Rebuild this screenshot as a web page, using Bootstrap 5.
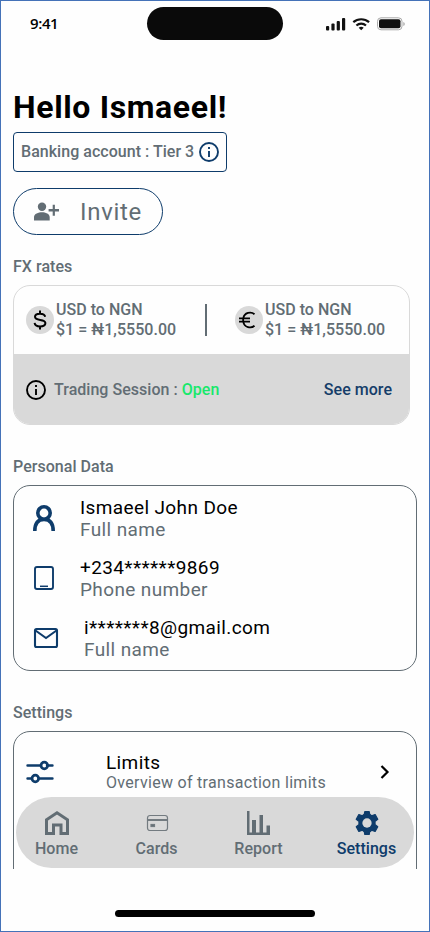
<!DOCTYPE html>
<html lang="en">
<head>
<meta charset="utf-8">
<meta name="viewport" content="width=device-width, initial-scale=1">
<title>Settings</title>
<link href="https://cdn.jsdelivr.net/npm/bootstrap@5.3.0/dist/css/bootstrap.min.css" rel="stylesheet">
<style>
:root{--slate:#626d74;--navy:#0e3c6b;--ash:#d9d9d9}
body{font-family:Roboto,"Liberation Sans",sans-serif;color:#000;background:#fefefe}
svg{display:block;flex:none}
.screen{width:430px;height:932px;border:1px solid #4472b8;background:#fefefe}
.status{height:53px;padding:6px 25px 0 29px}
.clock{font:600 15px/32px "Open Sans",sans-serif;letter-spacing:-.4px;width:117px}
.island{flex:none;width:136px;height:33px;border-radius:17px;background:#0a0a0a;margin-right:42px}
.content{height:815px;padding:0 12px}
.hello{font-size:32px;font-weight:700;line-height:38px;letter-spacing:.64px;margin:34px 0 0}
.lbl{font-size:16px;font-weight:500;line-height:20px;letter-spacing:.03px;color:var(--slate)}
.tier{width:214px;height:40px;border:1px solid var(--navy);border-radius:4px;margin-top:6px;padding-left:7px;gap:5px}
.invite{width:150px;height:47px;border:1px solid var(--navy);border-radius:24px;margin-top:16px;padding:0 0 0 20px;gap:20px;color:var(--slate);font-size:24px;letter-spacing:.7px;line-height:1}
.head-fx{margin-top:22px}
.head-panel{margin-top:32px}
.fx{width:397px;height:140px;border:1px solid var(--ash);border-radius:17px;margin-top:8px}
.rates{height:68px;padding-left:12px}
.coin{flex:none;width:28px;height:28px;border-radius:50%;background:var(--ash);margin-right:2px}
.coin.second{margin-left:28px}
.rate{flex:none;width:149px}
.rule{flex:none;width:2px;height:32px;background:var(--slate)}
.session{height:71px;background:var(--ash);padding:0 17px 0 12px}
.open{color:#18e86c}
.more{color:#153d69}
.panel{width:404px;border:1px solid var(--slate);border-radius:17px}
.personal{height:186px;margin-top:8px;padding-top:11px}
.entry{height:60px;padding-left:18px}
.glyph{width:48px;flex:none}
.big{font-size:19px;line-height:22px;letter-spacing:.38px}
.dim{color:var(--slate)}
.settings{height:200px;margin-top:8px;padding:20px 25px 0 11px}
.limits{margin-left:51px}
.small-note{font-size:16px;line-height:18px;letter-spacing:.3px}
.raised{margin-bottom:1px}
.tabs{left:15px;top:796px;width:398px;height:71px;border-radius:36px;background:var(--ash)}
.tab{flex:none;padding-top:13px;gap:3px;width:100px}
.tab-home{margin-left:-9.5px}
.tab-report{margin-left:2px}
.tab-settings{margin-left:8px;color:var(--navy)}
.homebar{left:114px;top:909px;width:200px;height:7px;border-radius:4px;background:#000}
</style>
</head>
<body>
<div class="screen position-relative overflow-hidden">
  <header class="status d-flex align-items-start">
    <div class="clock">9:41</div>
    <div class="island"></div>
    <svg width="78" height="34" viewBox="0 0 78 34" fill="#111" overflow="visible">
      <rect x="1" y="19" width="3.200" height="4.500" rx="1"/><rect x="6.400" y="16.500" width="3.200" height="7" rx="1"/><rect x="11.700" y="14" width="3.200" height="9.500" rx="1"/><rect x="17" y="11" width="3.200" height="12.500" rx="1"/>
      <g fill="none" stroke="#111" stroke-width="2.200"><path d="M28.300 15.200a12 12 0 0 1 15.800 0"/><path d="M31.400 18.500a7.300 7.300 0 0 1 9.600 0"/></g><path d="M33.700 20.800a4 4 0 0 1 5 0l-2.500 2.500z"/>
      <rect x="52.500" y="10.800" width="24.500" height="12" rx="3.500" fill="none" stroke="#aaa"/><rect x="54" y="12.300" width="21.500" height="9" rx="2"/><path d="M78.300 15v4q1.500-.7 1.500-2t-1.500-2z" fill="#aaa"/>
    </svg>
  </header>

  <main class="content overflow-hidden">
    <h1 class="hello text-nowrap">Hello Ismaeel!</h1>
    <div class="tier d-flex align-items-center text-nowrap">
      <span class="lbl">Banking account : Tier 3</span>
      <svg width="20" height="20" viewBox="0 0 20 20" fill="none" stroke="#0e3c6b" stroke-width="1.900"><circle cx="10" cy="10" r="9"/><path d="M10 9v6M10 5v2"/></svg>
    </div>
    <button class="invite btn d-flex align-items-center">
      <svg width="26" height="20" viewBox="0 0 26 20" fill="#626d74"><circle cx="8" cy="4.700" r="4.200"/><path d="M0 18.500v-3.300C0 11.800 4.500 10.300 8 10.300s7.700 1.500 7.700 4.900v3.300zM18.700 2.700h2.200v4.400H25v2.300h-4.100v4.400h-2.200V9.400h-4.100V7.100h4.100z"/></svg>
      <span>Invite</span>
    </button>
    <h2 class="lbl mb-0 head-fx">FX rates</h2>

    <section class="fx overflow-hidden">
      <div class="rates d-flex align-items-center text-nowrap">
        <div class="coin">
          <svg width="28" height="28" viewBox="0 0 28 28" fill="none" stroke="#000" stroke-width="2"><path d="M14 4.500V8M14 20v3.500M19.200 10.800C18.800 8.700 17 7.700 14 7.700c-3 0-5 1.100-5 3.100 0 4.700 10.400 1.600 10.400 6.300 0 2.200-2.200 3.400-5.300 3.400-3.300 0-5.200-1.300-5.500-3.600"/></svg>
        </div>
        <div class="lbl rate">USD to NGN<br>$1 = ₦1,5550.00</div>
        <div class="rule"></div>
        <div class="coin second">
          <svg width="28" height="28" viewBox="0 0 28 28" fill="none" stroke="#000" stroke-width="1.800"><path d="M19.500 8.200C16 5.200 9.300 6.500 8.300 12.200a9 9 0 0 0 0 3.600c1 5.700 7.700 7 11.200 4M4 12.300h11M4 15.700h11"/></svg>
        </div>
        <div class="lbl rate">USD to NGN<br>$1 = ₦1,5550.00</div>
      </div>
      <div class="session d-flex align-items-center">
        <svg width="20" height="20" viewBox="0 0 20 20" fill="none" stroke="#000" stroke-width="1.900"><circle cx="10" cy="10" r="9"/><path d="M10 9v6M10 5v2"/></svg>
        <span class="lbl ms-2">Trading Session : <span class="open">Open</span></span>
        <a href="#" class="lbl more ms-auto text-decoration-none">See more</a>
      </div>
    </section>

    <h2 class="lbl mb-0 head-panel">Personal Data</h2>
    <section class="panel personal">
      <div class="entry d-flex">
        <div class="glyph"><svg width="26" height="44" viewBox="0 0 26 44" fill="none" stroke="#0e3c6b" stroke-width="3.600"><circle cx="12" cy="16" r="6.200"/><path d="M2.800 34c0-7 3-11.500 9.200-11.500s9.200 4.500 9.200 11.500"/></svg></div>
        <div class="big"><div>Ismaeel John Doe</div><div class="dim">Full name</div></div>
      </div>
      <div class="entry d-flex">
        <div class="glyph"><svg width="26" height="44" viewBox="0 0 26 44" fill="none" stroke="#0e3c6b" stroke-width="1.900"><rect x="3" y="10" width="18" height="22" rx="2"/><path d="M8 29.300h8" stroke-width="1.500"/></svg></div>
        <div class="big"><div>+234******9869</div><div class="dim">Phone number</div></div>
      </div>
      <div class="entry d-flex">
        <div class="glyph me-1"><svg width="28" height="44" viewBox="0 0 28 44" fill="none" stroke="#0e3c6b" stroke-width="2.100"><rect x="3" y="12" width="22" height="18" rx="1.500"/><path d="M3.500 13.500 14 21l10.500-7.500"/></svg></div>
        <div class="big"><div>i*******8@gmail.com</div><div class="dim">Full name</div></div>
      </div>
    </section>

    <h2 class="lbl mb-0 head-panel">Settings</h2>
    <section class="panel settings">
      <div class="d-flex align-items-center">
        <svg class="raised" width="30" height="26" viewBox="0 0 30 26" fill="none" stroke="#0e3c6b" stroke-width="2.400" stroke-linecap="round"><path d="M2.500 6.500H15M22 6.500h5.500M2.500 19.500H6M14 19.500h13.500"/><circle cx="19.300" cy="6.500" r="3.300" stroke-width="2.800"/><circle cx="10.300" cy="19.500" r="3.300" stroke-width="2.800"/></svg>
        <div class="limits"><div class="big">Limits</div><div class="dim small-note">Overview of transaction limits</div></div>
        <svg class="ms-auto raised" width="12" height="16" viewBox="0 0 12 16" fill="none" stroke="#000" stroke-width="2.200"><path d="m2.500 2 6 6-6 6"/></svg>
      </div>
    </section>
  </main>

  <nav class="tabs position-absolute d-flex text-center">
    <a class="tab tab-home lbl d-flex flex-column align-items-center text-decoration-none">
      <svg width="26" height="26" viewBox="0 0 26 26" fill="none" stroke="#626d74" stroke-width="3"><path d="M2.500 23.500V9.800L13 2.800l10.500 7v13.700H17v-8.500H9.500v8.500z"/></svg><span>Home</span></a>
    <a class="tab lbl d-flex flex-column align-items-center text-decoration-none">
      <svg width="26" height="26" viewBox="0 0 26 26" fill="none" stroke="#737b80" stroke-width="1.200"><rect x="3.500" y="5.500" width="20" height="15" rx="2.500"/><path d="M3.500 10h20" stroke-width="2"/><rect x="7" y="14.500" width="3.500" height="2" fill="#626d74"/></svg><span>Cards</span></a>
    <a class="tab tab-report lbl d-flex flex-column align-items-center text-decoration-none">
      <svg width="26" height="26" viewBox="0 0 26 26" fill="#626d74"><path d="M1 1h2.500v21.500H6V10h4v12.500h3.500V5H17v17.500h3.500V15.500H24V25H1z"/></svg><span>Report</span></a>
    <a class="tab tab-settings lbl d-flex flex-column align-items-center text-decoration-none">
      <svg width="26" height="26" viewBox="0 0 24 24" fill="#0e3c6b" stroke="#0e3c6b" stroke-width="1.200" stroke-linejoin="round"><path d="M19.300 13.500a8 8 0 0 0 0-3l2.600-2-2.400-4.300-3.300 1.300A8 8 0 0 0 14.500 4L14 1.500h-4L9.500 4c-.7.300-1.200.700-1.700 1.500L4.500 4.200 2.100 8.500l2.600 2a8 8 0 0 0 0 3l-2.600 2 2.400 4.300 3.300-1.300c.5.600 1 1.100 1.700 1.500l.5 2.500h4l.5-2.500c.7-.3 1.200-.8 1.700-1.500l3.300 1.300 2.400-4.300z"/><circle cx="12" cy="12" r="4.300" fill="#d9d9d9" stroke="none"/></svg><span class="tab-name">Settings</span></a>
  </nav>
  <div class="homebar position-absolute"></div>
</div>
<script src="https://cdn.jsdelivr.net/npm/bootstrap@5.3.0/dist/js/bootstrap.bundle.min.js"></script>
</body>
</html>
